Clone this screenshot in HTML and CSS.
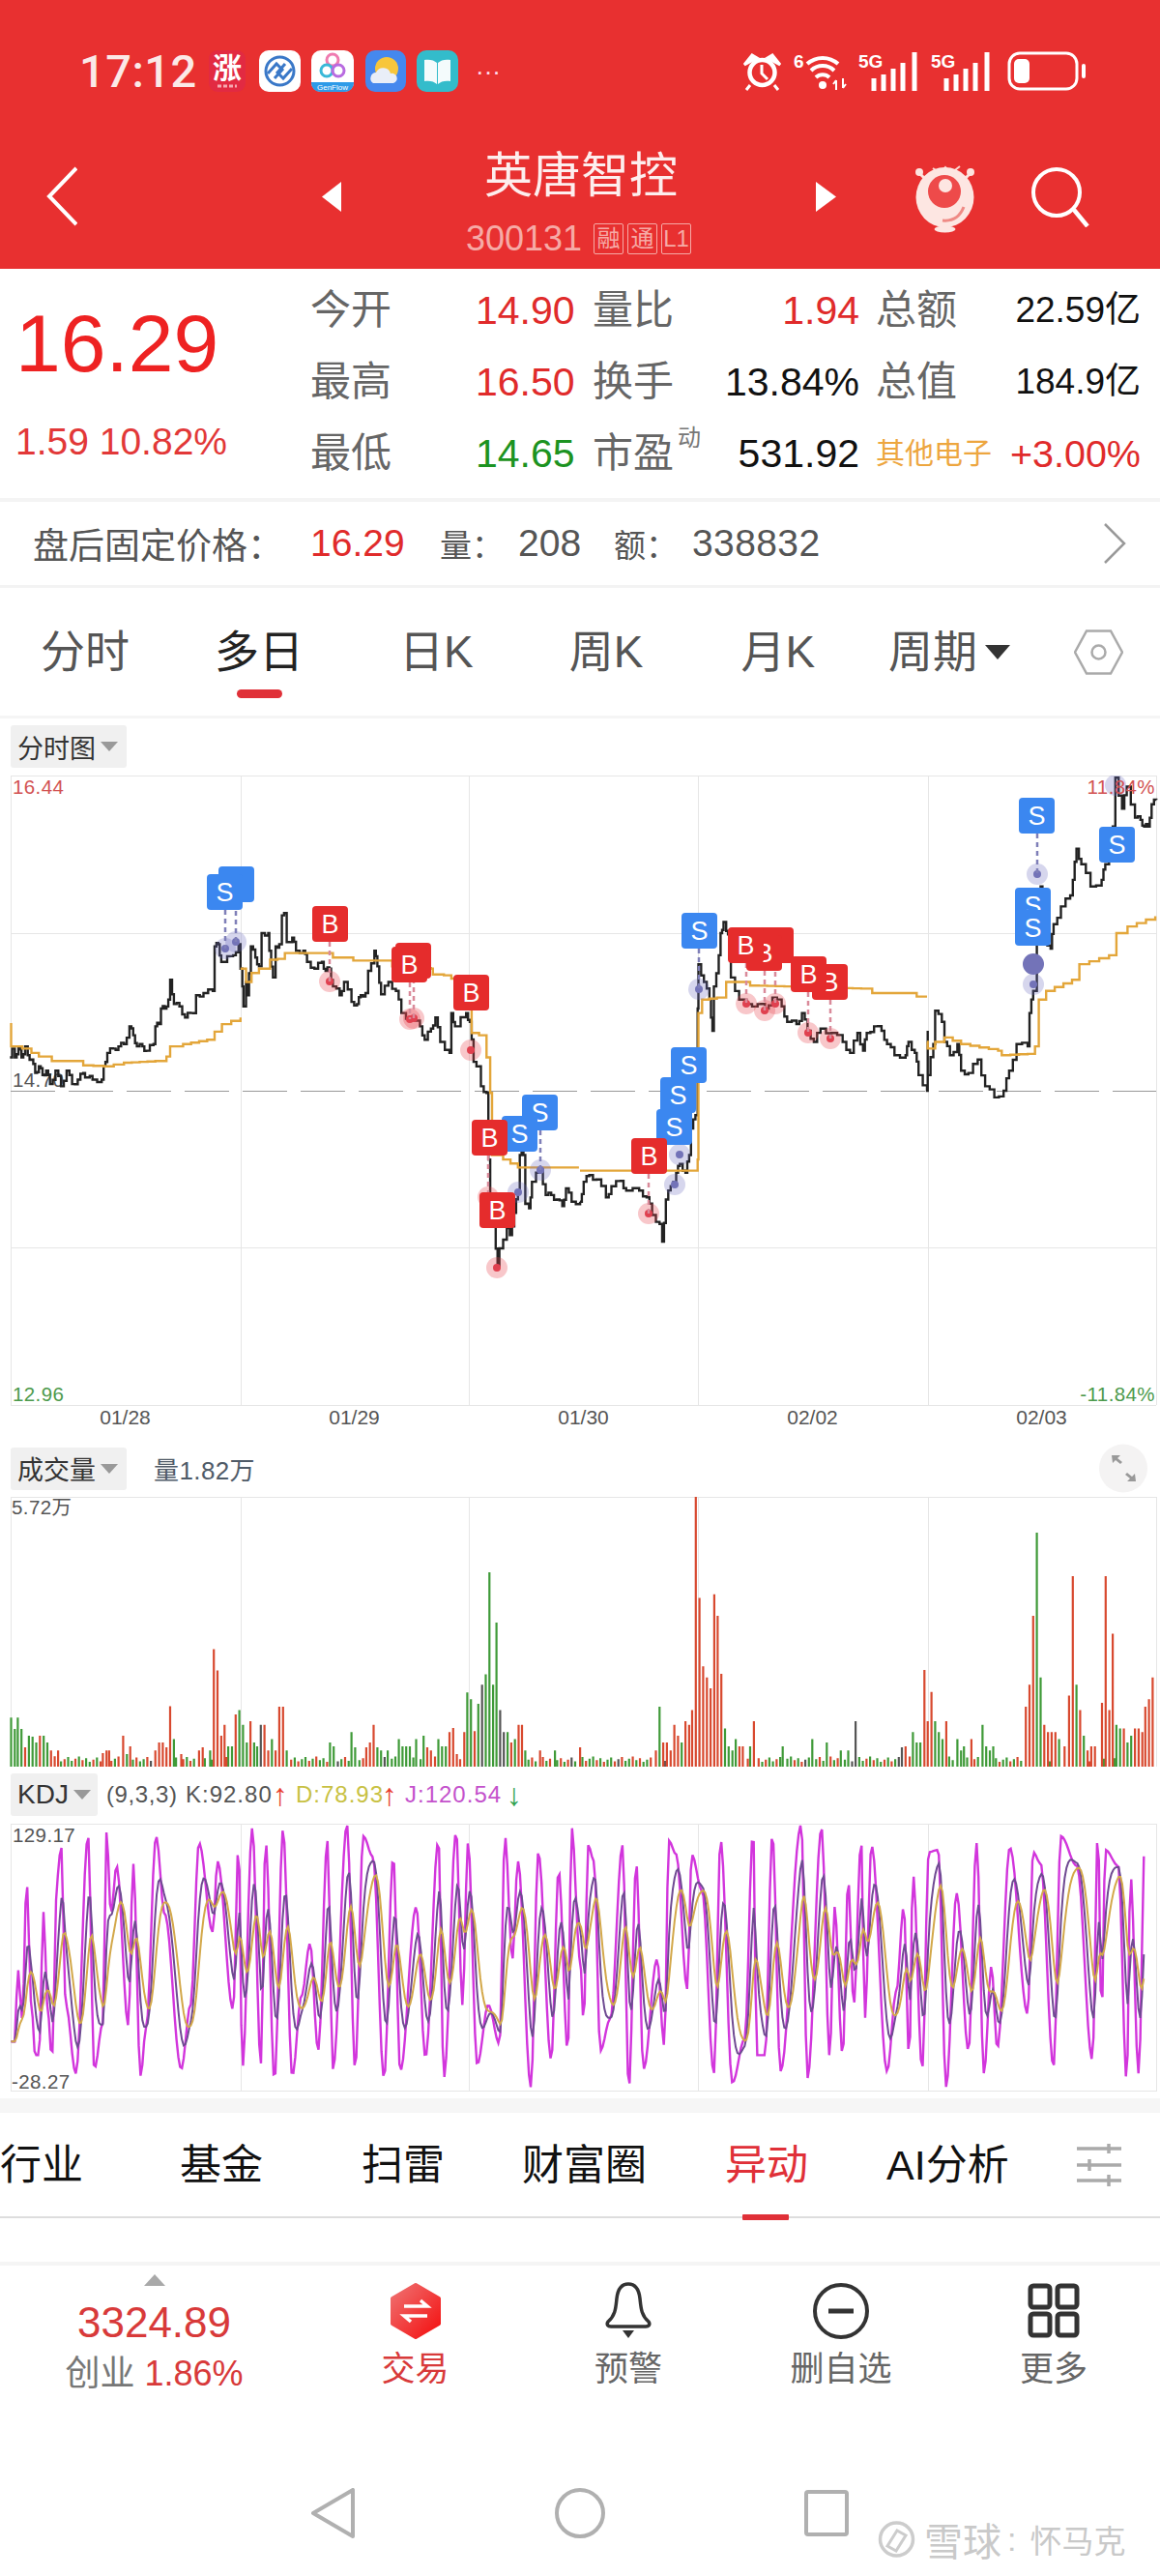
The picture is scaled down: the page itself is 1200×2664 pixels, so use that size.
FILE: index.html
```html
<!DOCTYPE html>
<html lang="zh">
<head>
<meta charset="utf-8">
<title>英唐智控</title>
<link rel="stylesheet" href="styles.css">
</head>
<body>
<div class="page">
  <header class="hero">
    <div class="status">
      <span class="time">17:12</span>
      <div class="apps">
        <svg class="app a1" viewBox="0 0 38 43"><rect width="38" height="43" rx="9" fill="#e22a42"/><text x="19" y="29" class="app-t">涨</text><path d="M9 37h20" stroke="#f6a8b0" stroke-width="3" stroke-dasharray="4 2"/></svg>
        <svg class="app a2" viewBox="0 0 43 43"><rect width="43" height="43" rx="10" fill="#fff"/><circle cx="21.500" cy="21.500" r="14.500" fill="none" stroke="#3a78c8" stroke-width="3"/><path d="M9 24l9-10 6 6-8 9M34 19l-9 10-6-6 8-9" fill="none" stroke="#3a78c8" stroke-width="3"/></svg>
        <svg class="app a3" viewBox="0 0 44 43"><rect width="44" height="43" rx="10" fill="#fff"/><path d="M0 33h44v1a9 9 0 0 1-9 9H9a9 9 0 0 1-9-9z" fill="#2e9be8"/><circle cx="22" cy="10" r="6" fill="none" stroke="#ef7bb0" stroke-width="3"/><circle cx="16" cy="21" r="6" fill="none" stroke="#39b8d8" stroke-width="3"/><circle cx="28" cy="21" r="6" fill="none" stroke="#b86ae0" stroke-width="3"/><text x="22" y="41" class="app-g">GenFlow</text></svg>
        <svg class="app a4" viewBox="0 0 42 43"><rect width="42" height="43" rx="10" fill="#4588ee"/><circle cx="22" cy="19" r="12" fill="#f7c63b"/><path d="M8 34a6 6 0 0 1 3-11 8 8 0 0 1 15 1 5 5 0 0 1 3 10z" fill="#e9eef8"/></svg>
        <svg class="app a5" viewBox="0 0 43 43"><rect width="43" height="43" rx="10" fill="#33bccb"/><path d="M8 10c5-1 10 0 13 3v22c-3-3-8-4-13-3zM35 10c-5-1-10 0-13 3v22c3-3 8-4 13-3z" fill="#f4fbfc"/></svg>
        <span class="more">···</span>
      </div>
      <div class="sys">
        <svg class="s-alarm" viewBox="0 0 41 40"><circle cx="20.500" cy="21" r="13" fill="none" stroke="#fff" stroke-width="4.500"/><path d="M20 13v9l6 6" fill="none" stroke="#fff" stroke-width="3"/><path d="M2 13l8-10 5 3zM39 13l-8-10-5 3zM8 34l-4 5M33 34l4 5" fill="#fff" stroke="#fff" stroke-width="3"/></svg>
        <svg class="s-wifi" viewBox="0 0 56 41"><text x="0" y="17" class="sig-t">6</text><path d="M14 13a24 24 0 0 1 32 0M18 20a17 17 0 0 1 24 0M23 27a10 10 0 0 1 14 0" fill="none" stroke="#fff" stroke-width="4"/><circle cx="30" cy="35" r="4" fill="#fff"/><path d="M44 30v10M41 34l3-4M51 28v10M54 34l-3 4" stroke="#fff" stroke-width="2" fill="none"/></svg>
        <svg class="s-sig" viewBox="0 0 62 41"><text x="0" y="17" class="sig-t">5G</text><path d="M16 41V28M26 41V24M36 41V18M46 41V12M58 41V1" stroke="#fff" stroke-width="5" fill="none"/></svg>
        <svg class="s-sig" viewBox="0 0 62 41"><text x="0" y="17" class="sig-t">5G</text><path d="M16 41V28M26 41V24M36 41V18M46 41V12M58 41V1" stroke="#fff" stroke-width="5" fill="none"/></svg>
        <svg class="s-bat" viewBox="0 0 81 41"><rect x="2" y="2" width="70" height="37" rx="11" fill="none" stroke="#fff" stroke-width="3"/><rect x="7" y="8" width="16" height="25" rx="5" fill="#fff"/><rect x="77" y="13" width="4" height="15" rx="2" fill="#fff"/></svg>
      </div>
    </div>
    <div class="nav">
      <svg class="back" viewBox="0 0 32 62"><path d="M31 2L3 31l28 29" fill="none" stroke="#fff" stroke-width="4"/></svg>
      <svg class="arrow-l" viewBox="0 0 20 31"><path d="M20 0v31L0 15.500z" fill="#fff"/></svg>
      <div class="title-block">
        <div class="title">英唐智控</div>
        <div class="code-row">
          <span class="code">300131</span>
          <span class="tags"><span class="tag">融</span><span class="tag">通</span><span class="tag">L1</span></span>
        </div>
      </div>
      <svg class="arrow-r" viewBox="0 0 21 31"><path d="M0 0v31l21-15.500z" fill="#fff"/></svg>
      <svg class="mascot" viewBox="0 0 61 75"><path d="M18 8l8 5 5-6 6 6 9-7" fill="none" stroke="#fbd8d0" stroke-width="2"/><circle cx="4" cy="12" r="4" fill="#fde4df"/><circle cx="57" cy="12" r="4" fill="#fde4df"/><path d="M5 14l8 8M56 14l-8 8" stroke="#fde4df" stroke-width="3"/><ellipse cx="30.500" cy="38" rx="30" ry="31" fill="#fde6e2"/><circle cx="30" cy="32" r="17" fill="#ee4a4a"/><circle cx="31" cy="26" r="7" fill="#fde6e2"/><path d="M28 62c10 1 18-4 22-14" fill="none" stroke="#ef8a85" stroke-width="3"/><ellipse cx="30.500" cy="71" rx="11" ry="3.500" fill="#fde6e2"/></svg>
      <svg class="search" viewBox="0 0 61 63"><circle cx="27" cy="27" r="24" fill="none" stroke="#fff" stroke-width="4"/><path d="M45 45l14 17" stroke="#fff" stroke-width="4.500"/></svg>
    </div>
  </header>

  <section class="quote">
    <div class="quote-main">
      <div class="price">16.29</div>
      <div class="change">1.59 10.82%</div>
    </div>
    <span class="lb">今开</span><span class="vl red">14.90</span><span class="lb">量比</span><span class="vr red">1.94</span><span class="lb">总额</span><span class="vm">22.59亿</span>
    <span class="lb">最高</span><span class="vl red">16.50</span><span class="lb">换手</span><span class="vr">13.84%</span><span class="lb">总值</span><span class="vm">184.9亿</span>
    <span class="lb">最低</span><span class="vl green">14.65</span><span class="lb pe">市盈<sup class="sup">动</sup></span><span class="vr">531.92</span><span class="sector">其他电子</span><span class="vm red big">+3.00%</span>
  </section>

  <section class="after">
    <span class="af-l">盘后固定价格：</span><span class="af-n red n1">16.29</span>
    <span class="af-k k1">量：</span><span class="af-n n2">208</span>
    <span class="af-k k2">额：</span><span class="af-n n3">338832</span>
    <svg class="af-chev" viewBox="0 0 23 42"><path d="M1 1l20 20L1 41" fill="none" stroke="#999" stroke-width="2.500"/></svg>
  </section>

  <nav class="tabs">
    <span class="tab t1">分时</span>
    <span class="tab t2 on">多日</span>
    <span class="tab t3">日K</span>
    <span class="tab t4">周K</span>
    <span class="tab t5">月K</span>
    <span class="tab t6">周期</span>
    <span class="tab-caret"></span>
    <svg class="hex" viewBox="0 0 51 47"><path d="M1 23.500L13 1.500h25l12 22-12 22H13z" fill="none" stroke="#aaa" stroke-width="2.500"/><circle cx="25.500" cy="23.500" r="7" fill="none" stroke="#aaa" stroke-width="2.500"/></svg>
  </nav>

  <section class="charts">
    <div class="chip chip-main">分时图<i class="caret"></i></div>
    <svg class="plot plot-main" viewBox="0 802 1200 652">
      <path class="frame" d="M11.500 1453V802.500H1196V1453M249.500 802V1453M485.500 802V1453M722.500 802V1453M960.500 802V1453M11 965.500H1196M11 1290.500H1196M11 1453.500H1196"/>
      <path class="mid" d="M11 1128.500H1196"/>
      <text class="ax red-t" x="13" y="821">16.44</text>
      <text class="ax gray-t" x="13" y="1124">14.70</text>
      <text class="ax green-t" x="13" y="1449">12.96</text>
      <path id="price" class="line-price"/>
      <path id="avg" class="line-avg"/>
      <g class="halo-s"><circle cx="233" cy="981" r="11"/><circle cx="244" cy="974" r="11"/><circle cx="536" cy="1233" r="11"/><circle cx="559" cy="1210" r="11"/><circle cx="723" cy="1023" r="11"/><circle cx="698" cy="1225" r="11"/><circle cx="703" cy="1194" r="11"/><circle cx="1073" cy="904" r="11"/><circle cx="1069" cy="1018" r="11"/><circle cx="1154" cy="812" r="11"/></g>
      <g class="dot-s"><circle cx="233" cy="981" r="4"/><circle cx="244" cy="974" r="4"/><circle cx="536" cy="1233" r="4"/><circle cx="559" cy="1210" r="4"/><circle cx="723" cy="1023" r="4"/><circle cx="698" cy="1225" r="4"/><circle cx="703" cy="1194" r="4"/><circle cx="1073" cy="904" r="4"/><circle cx="1069" cy="1018" r="4"/><circle cx="1069" cy="997" r="11"/></g>
      <g class="halo-b"><circle cx="341" cy="1015" r="11"/><circle cx="424" cy="1054" r="11"/><circle cx="428" cy="1053" r="11"/><circle cx="487" cy="1086" r="11"/><circle cx="514" cy="1311" r="11"/><circle cx="505" cy="1238" r="11"/><circle cx="772" cy="1038" r="11"/><circle cx="791" cy="1045" r="11"/><circle cx="802" cy="1038" r="11"/><circle cx="836" cy="1068" r="11"/><circle cx="859" cy="1074" r="11"/><circle cx="671" cy="1255" r="11"/></g>
      <g class="dot-b"><circle cx="341" cy="1015" r="4"/><circle cx="424" cy="1054" r="4"/><circle cx="428" cy="1053" r="4"/><circle cx="487" cy="1086" r="4"/><circle cx="514" cy="1311" r="4"/><circle cx="772" cy="1038" r="4"/><circle cx="791" cy="1045" r="4"/><circle cx="802" cy="1038" r="4"/><circle cx="836" cy="1068" r="4"/><circle cx="859" cy="1074" r="4"/><circle cx="671" cy="1255" r="4"/></g>
      <path class="dash-s" d="M233 941V981M244 933V974M559 1169V1210M723 981V1023M1073 862V904"/>
      <path class="dash-b" d="M341 974V1015M424 1016V1054M428 1012V1053M505 1195V1238M772 996V1038M791 1004V1045M802 996V1038M836 1026V1068M859 1034V1074M671 1214V1255"/>
      <g class="sell" transform="translate(226 896)"><rect width="37" height="37" rx="4"/></g>
      <g class="sell" transform="translate(214 904)"><rect width="37" height="37" rx="4"/><text x="18.500" y="28">S</text></g>
      <g class="buy" transform="translate(323 937)"><rect width="37" height="37" rx="4"/><text x="18.500" y="28">B</text></g>
      <g class="buy" transform="translate(409 975)"><rect width="37" height="37" rx="4"/></g>
      <g class="buy" transform="translate(405 979)"><rect width="37" height="37" rx="4"/><text x="18.500" y="28">B</text></g>
      <g class="buy" transform="translate(469 1008)"><rect width="37" height="37" rx="4"/><text x="18.500" y="28">B</text></g>
      <g class="sell" transform="translate(540 1132)"><rect width="37" height="37" rx="4"/><text x="18.500" y="28">S</text></g>
      <g class="sell" transform="translate(519 1154)"><rect width="37" height="37" rx="4"/><text x="18.500" y="28">S</text></g>
      <g class="buy" transform="translate(488 1158)"><rect width="37" height="37" rx="4"/><text x="18.500" y="28">B</text></g>
      <g class="buy" transform="translate(496 1233)"><rect width="37" height="37" rx="4"/><text x="18.500" y="28">B</text></g>
      <g class="sell" transform="translate(705 944)"><rect width="37" height="37" rx="4"/><text x="18.500" y="28">S</text></g>
      <g class="buy" transform="translate(784 959)"><rect width="37" height="37" rx="4"/></g>
      <g class="buy" transform="translate(772 967)"><rect width="37" height="37" rx="4"/><text x="18.500" y="28">B</text></g>
      <g class="buy" transform="translate(753 959)"><rect width="37" height="37" rx="4"/><text x="18.500" y="28">B</text></g>
      <g class="buy" transform="translate(840 997)"><rect width="37" height="37" rx="4"/><text x="18.500" y="28">B</text></g>
      <g class="buy" transform="translate(818 989)"><rect width="37" height="37" rx="4"/><text x="18.500" y="28">B</text></g>
      <g class="sell" transform="translate(694 1083)"><rect width="37" height="37" rx="4"/><text x="18.500" y="28">S</text></g>
      <g class="sell" transform="translate(683 1114)"><rect width="37" height="37" rx="4"/><text x="18.500" y="28">S</text></g>
      <g class="sell" transform="translate(679 1147)"><rect width="37" height="37" rx="4"/><text x="18.500" y="28">S</text></g>
      <g class="buy" transform="translate(653 1177)"><rect width="37" height="37" rx="4"/><text x="18.500" y="28">B</text></g>
      <g class="sell" transform="translate(1054 825)"><rect width="37" height="37" rx="4"/><text x="18.500" y="28">S</text></g>
      <g class="sell" transform="translate(1050 918)"><rect width="37" height="37" rx="4"/><text x="18.500" y="28">S</text></g>
      <g class="sell" transform="translate(1050 941)"><rect width="37" height="37" rx="4"/><text x="18.500" y="28">S</text></g>
      <g class="sell" transform="translate(1137 855)"><rect width="37" height="37" rx="4"/><text x="18.500" y="28">S</text></g>
      <text class="ax red-t end" x="1195" y="821">11.84%</text>
      <text class="ax green-t end" x="1195" y="1449">-11.84%</text>
    </svg>
    <div class="dates"><span>01/28</span><span>01/29</span><span>01/30</span><span>02/02</span><span>02/03</span></div>

    <div class="vol-head">
      <div class="chip">成交量<i class="caret"></i></div>
      <span class="vol-val">量1.82万</span>
      <svg class="expand" viewBox="0 0 50 51"><circle cx="25" cy="25.500" r="25" fill="#f4f3f3"/><path d="M13 12h9l-3 3 5 4-2 2-5-4-3 3zM38 39h-9l3-3-5-4 2-2 5 4 3-3z" fill="#999"/></svg>
    </div>
    <svg class="plot plot-vol" viewBox="0 1548 1200 279">
      <path class="frame" d="M11.500 1827V1548.500H1196V1827M249.500 1548V1827M485.500 1548V1827M722.500 1548V1827M960.500 1548V1827"/>
      <text class="ax gray-t" x="12" y="1566">5.72万</text>
      <path id="vol-dark" class="bar-dark"/><path id="vol-green" class="bar-green"/><path id="vol-red" class="bar-red"/>
    </svg>

    <div class="kdj-head">
      <div class="chip chip-kdj">KDJ<i class="caret"></i></div>
      <span class="kdj-p">(9,3,3)</span>
      <span class="kdj-k">K:92.80</span><span class="up">↑</span>
      <span class="kdj-d">D:78.93</span><span class="up">↑</span>
      <span class="kdj-j">J:120.54</span><span class="down">↓</span>
    </div>
    <svg class="plot plot-kdj" viewBox="0 1886 1200 277">
      <path class="frame" d="M11.500 2163V1886.500H1196V2163M249.500 1886V2163M485.500 1886V2163M722.500 1886V2163M960.500 1886V2163M11 2162.500H1196"/>
      <text class="ax gray-t" x="13" y="1905">129.17</text>
      <text class="ax gray-t" x="12" y="2160">-28.27</text>
      <path id="kdj-j" class="ln-j"/><path id="kdj-k" class="ln-k"/><path id="kdj-d" class="ln-d"/>
    </svg>
  </section>
  <div class="band"></div>

  <nav class="subtabs">
    <span class="st s1">行业</span>
    <span class="st s2">基金</span>
    <span class="st s3">扫雷</span>
    <span class="st s4">财富圈</span>
    <span class="st s5 on">异动</span>
    <span class="st s6">AI分析</span>
    <svg class="sliders" viewBox="0 0 46 44"><path d="M0 5h46M0 22h46M0 38h46" stroke="#aaa" stroke-width="3.500"/><path d="M33 0v10M13 16v12M33 32v12" stroke="#aaa" stroke-width="3.500"/></svg>
  </nav>
  <div class="rule"></div>

  <footer class="bottom">
    <div class="idx">
      <i class="idx-up"></i>
      <span class="idx-v">3324.89</span>
      <span class="idx-n">创业 <b>1.86%</b></span>
    </div>
    <div class="act">
      <svg class="act-i" viewBox="0 0 54 60"><defs><linearGradient id="tr" x1="0" y1="0" x2="1" y2="1"><stop offset="0" stop-color="#ef7272"/><stop offset="1" stop-color="#f40f0f"/></linearGradient></defs><path d="M27 3l24 14v26L27 57 3 43V17z" fill="url(#tr)" stroke="url(#tr)" stroke-width="4" stroke-linejoin="round"/><path d="M15 25h24l-7-6M39 35H15l7 6" fill="none" stroke="#fff" stroke-width="3.500"/></svg>
      <span class="act-t red">交易</span>
    </div>
    <div class="act">
      <svg class="act-i" viewBox="0 0 54 60"><path d="M27 2c-7 0-11 6-12 15-1 9-1 17-9 24-2 3 0 5 3 5h36c3 0 5-2 3-5-8-7-8-15-9-24-1-9-5-15-12-15z" fill="none" stroke="#333" stroke-width="3.500"/><path d="M21 50h12l-6 8z" fill="#333"/></svg>
      <span class="act-t">预警</span>
    </div>
    <div class="act">
      <svg class="act-i" viewBox="0 0 58 60"><ellipse cx="29" cy="30" rx="27" ry="27" fill="none" stroke="#333" stroke-width="4"/><path d="M16 30h26" stroke="#333" stroke-width="5"/></svg>
      <span class="act-t">删自选</span>
    </div>
    <div class="act">
      <svg class="act-i" viewBox="0 0 54 60"><g fill="none" stroke="#333" stroke-width="5"><rect x="3" y="4" width="20" height="22" rx="3"/><rect x="31" y="4" width="20" height="22" rx="3"/><rect x="3" y="33" width="20" height="22" rx="3"/><rect x="31" y="33" width="20" height="22" rx="3"/></g></svg>
      <span class="act-t">更多</span>
    </div>
  </footer>

  <div class="sysnav">
    <svg class="sn sn-back" viewBox="0 0 46 52"><path d="M44 2v48L3 26z" fill="none" stroke="#b0b0b0" stroke-width="4" stroke-linejoin="round"/></svg>
    <svg class="sn sn-home" viewBox="0 0 52 52"><circle cx="26" cy="26" r="24" fill="none" stroke="#b0b0b0" stroke-width="4"/></svg>
    <svg class="sn sn-rec" viewBox="0 0 46 48"><rect x="2" y="2" width="42" height="44" rx="2" fill="none" stroke="#b0b0b0" stroke-width="4"/></svg>
  </div>
  <div class="mark">
    <svg class="mark-i" viewBox="0 0 39 38"><circle cx="19.500" cy="19" r="17" fill="none" stroke="#ccc" stroke-width="3.500"/><path d="M10 26L20 10l9 5-10 16z" fill="none" stroke="#ccc" stroke-width="3"/></svg>
    <span class="mark-a">雪球</span><span class="mark-c">:</span><span class="mark-b">怀马克</span>
  </div>
</div>
<script src="chart.js"></script>
</body>
</html>
```

FILE: styles.css
```css
*{box-sizing:border-box}
html,body{margin:0;padding:0;background:#fff}
body{font-family:"Liberation Sans","Noto Sans CJK SC",sans-serif;color:#333}
.page{width:1200px;height:2664px;overflow:hidden;position:relative}
svg{display:block;flex:none}
.red{color:#e02b2b}
.green{color:#1c9321}

.hero{background:#e83030;height:278px;color:#fff}
.status{display:flex;align-items:center;height:95px;padding:52px 77px 0 82px}
.time{font-family:Roboto,"Liberation Sans",sans-serif;font-weight:500;font-size:47px;line-height:43px;width:134px;color:#fbe9e7;flex:none;letter-spacing:.5px}
.apps{display:flex;align-items:center;gap:12px}
.app{height:43px}
.a1{width:38px}.a2{width:43px;margin-left:2px}.a3{width:44px;margin-left:-1px}.a4{width:42px}.a5{width:43px;margin-left:-1px}
.app-t{font-size:30px;fill:#fff;text-anchor:middle;font-weight:700}
.app-g{font-size:8px;fill:#fff;text-anchor:middle}
.more{font-size:26px;line-height:26px;margin-left:6px;color:#fde}
.sys{display:flex;align-items:center;margin-left:auto;height:41px}
.s-alarm{width:41px;height:40px}
.s-wifi{width:56px;height:41px;margin-left:12px}
.s-sig{width:62px;height:41px;margin-left:11px}
.s-sig + .s-sig{margin-left:13px}
.s-bat{width:81px;height:41px;margin-left:17px}
.sig-t{font-size:19px;font-weight:700;fill:#fff}

.nav{display:flex;align-items:center;height:92px;margin-top:62px;padding-left:48px}
.back{width:32px;height:62px}
.arrow-l{width:20px;height:31px;margin-left:253px}
.title-block{width:231px;margin-left:129px;align-self:flex-start}
.title{font-size:50px;line-height:50px;padding-left:19px;color:#fdeeee;white-space:nowrap}
.code-row{display:flex;align-items:center;margin-top:24px;height:32px;color:#f6aaa6}
.code{font-size:36px;line-height:32px;width:132px;flex:none}
.tags{display:flex;gap:4px}
.tag{width:31px;height:32px;border:1px solid #f6aaa6;border-radius:2px;font-size:24px;line-height:30px;text-align:center}
.arrow-r{width:21px;height:31px;margin-left:131px}
.mascot{width:61px;height:75px;margin-left:82px}
.search{width:61px;height:63px;margin-left:58px}

.quote{height:237px;padding-top:6px;display:grid;grid-template-columns:321px 171px 121px 85px 208px 120px 154px;grid-template-rows:74px 74px 74px;align-items:center}
.quote-main{grid-row:1/4;grid-column:1;align-self:start;padding:30px 0 0 16px}
.price{font-size:84px;line-height:82px;color:#ee2222}
.change{font-size:39px;line-height:40px;margin-top:41px;color:#e23838;white-space:nowrap}
.lb{font-size:42px;line-height:46px;color:#666;white-space:nowrap}
.vl{font-size:41px;line-height:46px}
.vr{font-size:41px;line-height:46px;color:#111;text-align:right;padding-right:17px}
.vr.red{color:#e02b2b}
.vm{font-size:37px;line-height:46px;color:#111;text-align:right;white-space:nowrap}
.vm.red{color:#e02b2b}
.vm.big{font-size:39.500px}
.pe{position:relative}
.sup{position:absolute;left:88px;top:-6px;font-size:24px;line-height:26px;color:#777}
.sector{font-size:30px;line-height:46px;color:#eda63f;white-space:nowrap}

.after{height:93px;display:flex;align-items:center;border-top:4px solid #f4f4f4;border-bottom:3px solid #f3f3f3;padding:0 35px 0 34px;color:#555}
.af-l{font-size:37px;width:287px;flex:none;white-space:nowrap}
.af-n{font-size:39px;flex:none}
.af-k{font-size:33px;flex:none;width:81px;white-space:nowrap}
.n1{width:134px}.n2{width:99px}.n3{letter-spacing:.4px}
.af-chev{width:23px;height:42px;margin-left:auto}

.tabs{height:135px;display:flex;align-items:center;border-bottom:3px solid #f5f5f5;color:#555}
.tab{font-size:46px;line-height:46px;position:relative;white-space:nowrap;flex:none}
.t1{margin-left:42px}.t2{margin-left:88px;color:#222}.t3{margin-left:99px}.t4{margin-left:99px}.t5{margin-left:101px}.t6{margin-left:76px}
.tab.on::after{content:"";position:absolute;left:23px;top:62px;width:47px;height:9px;border-radius:5px;background:#e03038}
.tab-caret{width:0;height:0;border-left:13px solid transparent;border-right:13px solid transparent;border-top:15px solid #333;margin-left:8px}
.hex{width:51px;height:47px;margin-left:66px}

.charts{display:flex;flex-direction:column}
.chip{height:44px;width:120px;margin-left:11px;background:#f0f0f0;border-radius:3px;display:flex;align-items:center;padding-left:7px;font-size:27px;color:#333;flex:none}
.chip-main{margin-top:7px}
.chip-kdj{width:90px}
.caret{display:block;width:0;height:0;border-left:9px solid transparent;border-right:9px solid transparent;border-top:10px solid #999;margin-left:5px}
.plot{width:1200px}
.plot-main{height:652px;margin-top:8px}
.plot-vol{height:279px;margin-top:8px}
.plot-kdj{height:277px;margin-top:8px}
.frame{fill:none;stroke:#e6e6e6;stroke-width:1;shape-rendering:crispEdges}
.mid{fill:none;stroke:#999;stroke-width:1;stroke-dasharray:46 14;shape-rendering:crispEdges}
.ax{font-size:20.500px;font-family:"Liberation Sans","Noto Sans CJK SC",sans-serif;letter-spacing:.4px}
.end{text-anchor:end}
.red-t{fill:#d25252}.green-t{fill:#4c9a4c}.gray-t{fill:#555}
.line-price{fill:none;stroke:#222;stroke-width:2.400}
.line-avg{fill:none;stroke:#e3a63a;stroke-width:2.400}
.halo-s circle{fill:rgba(108,108,190,.28)}
.dot-s circle{fill:#7373b8}
.halo-b circle{fill:rgba(232,70,80,.3)}
.dot-b circle{fill:#e0404f}
.dash-s{fill:none;stroke:#7f7fb8;stroke-width:2.500;stroke-dasharray:5 4}
.dash-b{fill:none;stroke:#d98a9a;stroke-width:2.500;stroke-dasharray:5 4}
.sell rect{fill:#3b87f0}
.buy rect{fill:#e52c2c}
.sell text,.buy text{fill:#fff;font-size:27px;text-anchor:middle;font-family:"Liberation Sans",sans-serif}

.dates{display:grid;grid-template-columns:repeat(5,237px);padding-left:11px;height:43px;font-size:21px;line-height:24px;color:#555;text-align:center}
.vol-head{display:flex;align-items:center;height:43px}
.vol-val{font-size:26px;color:#4f5b68;margin-left:28px;letter-spacing:.4px}
.expand{width:50px;height:51px;margin:0 13px 0 auto}
.bar-red,.bar-green,.bar-dark{fill:none;stroke-width:2.200}
.bar-red{stroke:#d8492f}.bar-green{stroke:#3f9a38}.bar-dark{stroke:#555}

.kdj-head{display:flex;align-items:center;height:44px;margin-top:7px;font-size:24px;color:#555;letter-spacing:1px;white-space:nowrap}
.kdj-head .chip{letter-spacing:0;font-size:28px}
.kdj-p{margin-left:9px;width:82px;flex:none;letter-spacing:.6px}
.kdj-k{width:90px;flex:none}
.up{color:#e8402c;width:24px;flex:none;font-size:32px;line-height:32px;text-align:left}
.down{color:#33a350;width:24px;flex:none;font-size:32px;line-height:32px}
.kdj-d{color:#c8c143;width:89px;flex:none}
.kdj-j{color:#c452cc;width:105px;flex:none}
.ln-j{fill:none;stroke:#d235dc;stroke-width:2.400}
.ln-k{fill:none;stroke:#6f4a92;stroke-width:2}
.ln-d{fill:none;stroke:#d3a84a;stroke-width:2}

.band{height:15px;margin-top:7px;background:#f6f6f6}
.subtabs{height:109px;display:flex;align-items:center;border-bottom:2px solid #ddd;color:#111}
.st{font-size:43px;line-height:46px;position:relative;flex:none;white-space:nowrap}
.s1{margin-left:0}.s2{margin-left:100px}.s3{margin-left:102px}.s4{margin-left:80px}.s5{margin-left:81px;color:#e03038}.s6{margin-left:81px}
.st.on::before{content:"";position:absolute;left:-55px;width:192px;top:79px;height:4px;background:#fff}
.st.on::after{content:"";position:absolute;left:18px;top:74px;width:48px;height:6px;background:#e03038;border-radius:1px}
.sliders{width:46px;height:44px;margin-left:70px}
.rule{height:4px;margin-top:45px;background:#f5f5f5}

.bottom{display:grid;grid-template-columns:319px 221px 220px 220px 220px;height:137px}
.idx{display:flex;flex-direction:column;align-items:center;padding-top:9px}
.idx-up{display:block;width:0;height:0;border-left:11px solid transparent;border-right:11px solid transparent;border-bottom:12px solid #a9a9a9}
.idx-v{font-size:44px;line-height:42px;margin-top:17px;color:#d83a3a}
.idx-n{font-size:36px;line-height:36px;margin-top:14px;color:#777;white-space:nowrap}
.idx-n b{font-weight:400;color:#d83a3a}
.act{display:flex;flex-direction:column;align-items:center;padding-top:17px}
.act-i{height:60px;width:58px}
.act-t{font-size:35px;line-height:34px;margin-top:13px;color:#666}
.act-t.red{color:#d83a3a}

.sysnav{display:flex;margin-top:93px;padding-left:321px}
.sn{height:52px}
.sn-back{width:46px}
.sn-home{width:52px;margin-left:207px}
.sn-rec{width:46px;height:48px;margin-left:206px;margin-top:2px}
.mark{position:absolute;left:908px;top:2607px;display:flex;align-items:center;height:38px;color:#c9c9c9}
.mark-i{width:39px;height:38px}
.mark-a{font-size:40px;margin-left:9px}
.mark-c{font-size:34px;margin-left:6px}
.mark-b{font-size:33px;margin-left:14px}
```

FILE: chart.js
```js
(function () {
  var LX = 1 / 2.613, MY = 1 / 2.178, VY = 1 / 2.119;
  function X(zx, right) { return (right ? 600 : 0) + zx * LX; }
  function mainY(zy) { return 740 + zy * MY; }
  function lowY(zy) { return 1460 + zy * VY; }
  function f(n) { return n.toFixed(1); }

  /* price and average traces, one array per session: x,y pairs */
  var priceL = [27,770,33,750,40,770,50,745,58,770,68,745,75,765,85,775,95,805,105,790,115,810,125,800,135,830,150,800,165,835,180,800,195,830,210,820,225,805,235,815,250,820,275,820,280,790,290,760,305,750,320,745,335,740,350,700,360,720,370,745,385,745,395,755,415,740,420,700,430,695,435,660,445,660,455,640,460,595,470,650,485,655,500,680,515,670,530,660,530,630,550,625,575,620,580,520,590,515,598,555,630,540,645,515,
    650,570,655,610,658,655,665,600,668,630,678,520,690,545,700,565,707,490,725,490,728,530,738,590,745,520,755,515,762,450,768,445,775,510,790,500,800,530,820,530,830,555,850,570,870,555,880,575,890,570,900,610,918,630,930,600,950,645,965,650,975,630,988,625,995,575,1012,530,1020,565,1030,628,1050,600,1070,620,1085,670,1110,685,1135,700,1148,730,1165,705,1177,680,1190,735,1215,760,1220,670,1230,700,1260,670,
    1270,690,1280,780,1296,790,1300,835,1315,850,1320,1000,1325,1100,1335,1150,1345,1240,1350,1200,1370,1150,1378,1170,1390,1120,1400,1070,1405,990,1415,990,1420,1100,1430,1110,1438,1050,1460,1020,1475,1080,1490,1080,1505,1090,1520,1105,1530,1065,1545,1095,1568,1095];
  var priceR = [0,1095,10,1050,25,1035,45,1045,70,1085,85,1060,110,1048,125,1070,160,1070,180,1085,195,1125,215,1145,222,1185,232,1090,245,1060,260,1030,270,1010,285,1030,295,990,300,930,312,900,318,660,320,560,335,600,350,640,358,710,362,610,375,540,380,490,388,465,395,485,405,490,408,590,430,640,450,650,480,650,500,660,520,635,545,655,560,690,585,695,600,670,615,710,632,735,650,705,680,715,710,735,730,760,750,715,765,755,775,715,795,700,815,710,830,740,850,765,880,765,888,735,905,760,915,810,938,845,
    940,710,940,810,955,740,960,665,978,690,985,735,1000,765,1020,740,1030,800,1050,805,1075,775,1095,835,1120,860,1145,845,1160,800,1180,740,1210,745,1215,670,1225,620,1245,385,1255,500,1272,525,1280,470,1300,430,1325,405,1332,370,1342,300,1355,335,1380,385,1410,370,1420,335,1440,250,1447,140,1465,210,1478,160,1500,230,1515,235,1525,250,1535,250,1545,200,1558,190];
  var avgSegs = [
    [0,[27,695,30,745,60,750,85,760,105,768,140,778,215,778,225,788,280,790,335,782,420,778,450,768,460,745,495,740,560,730,580,712,600,695,650,680]],
    [0,[650,570,665,600,680,580,700,570,730,550,750,548,770,535,890,535,900,545,950,545,955,552,1040,552,1060,565,1165,570,1170,583,1200,585,1240,600,1270,660,1275,715,1295,720,1315,770,1325,850,1330,990,1360,1000,1400,1018,1565,1018]],
    [1,[0,1025,310,1025,318,1000,320,670,330,640,370,635,395,600,450,600,460,608,760,615,790,625,900,625,910,633,938,633]],
    [1,[938,735,940,750,960,735,985,725,1030,740,1130,755,1140,765,1210,762,1230,745,1240,640,1260,620,1330,595,1350,560,1430,540,1450,490,1480,475,1555,452]]
  ];

  function stepPath(pts, right, jitter, first) {
    var d = "";
    for (var i = 0; i < pts.length; i += 2) {
      var x = X(pts[i], right), y = mainY(pts[i + 1]);
      if (i === 0) { d += (first ? "M" : "L") + f(x) + " " + f(y); continue; }
      var px = X(pts[i - 2], right), py = mainY(pts[i - 1]);
      if (jitter && x - px > 3) {
        var mx = (px + x) / 2, my = (py + y) / 2 + ((i % 4) ? 2.5 : -2.5);
        d += "H" + f(mx) + "V" + f(my);
      }
      d += "H" + f(x) + "V" + f(y);
    }
    return d;
  }
  /* the average line is smooth: short diagonals rather than tall steps */
  function avgPath(pts, right) {
    var d = "";
    for (var i = 0; i < pts.length; i += 2) {
      var x = X(pts[i], right), y = mainY(pts[i + 1]);
      if (i === 0) { d += "M" + f(x) + " " + f(y); continue; }
      var px = X(pts[i - 2], right), py = mainY(pts[i - 1]);
      var n = Math.max(1, Math.round((x - px) / 9));
      for (var j = 1; j <= n; j++) {
        d += "H" + f(px + (x - px) * j / n) + "V" + f(py + (y - py) * j / n);
      }
    }
    return d;
  }
  document.getElementById("price").setAttribute("d", stepPath(priceL, false, true, true) + stepPath(priceR, true, true, false));
  document.getElementById("avg").setAttribute("d", avgSegs.map(function (s) { return avgPath(s[1], !!s[0]); }).join(""));

  /* volume: x, top, colour (r red, g green, d dark), in crop coordinates */
  var volL = [30,670,"g",40,695,"g",48,670,"g",58,695,"g",68,735,"r",78,710,"g",88,712,"g",98,725,"g",108,710,"r",118,710,"g",128,725,"g",138,742,"r",148,755,"r",157,742,"r",278,748,"r",288,742,"r",295,742,"r",333,710,"r",343,750,"g",352,733,"r",420,742,"r",430,725,"r",440,725,"r",450,735,"r",460,645,"r",470,717,"g",490,750,"r",538,742,"r",548,735,"r",568,742,"g",578,520,"r",588,567,"r",598,710,"r",607,686,"r",617,733,"g",627,733,"g",637,663,"r",647,654,"g",657,686,"g",667,725,"g",677,678,"r",687,725,"g",695,733,"g",705,686,"d",715,686,"r",725,742,"r",735,717,"g",745,742,"r",755,646,"r",765,646,"r",775,742,"g",892,725,"g",902,733,"g",950,702,"g",960,735,"g",990,735,"r",1000,725,"r",1010,686,"r",1020,735,"g",1030,742,"g",1048,742,"g",1078,717,"g",1088,733,"g",1098,733,"g",1108,733,"g",1125,717,"g",1145,710,"g",1155,735,"r",1165,742,"r",1185,717,"g",1195,733,"g",1205,733,"g",1215,702,"r",1225,693,"r",1235,750,"r",1255,702,"r",1263,615,"g",1273,630,"g",1283,700,"r",1293,640,"g",1303,598,"d",1313,575,"g",1323,352,"g",1333,598,"g",1342,462,"g",1352,654,"d",1362,702,"d",1372,702,"g",1382,725,"r",1392,717,"g",1402,686,"r",1411,686,"r",1420,742,"g",1460,742,"r",1500,742,"g",1568,735,"r"];
  var volR = [215,646,"g",205,742,"r",225,725,"r",235,725,"r",245,742,"r",255,686,"r",265,710,"r",275,725,"g",285,678,"r",295,686,"r",303,654,"r",313,185,"r",323,408,"r",333,558,"r",343,582,"r",353,606,"r",363,400,"r",372,447,"r",382,574,"r",392,694,"g",402,733,"g",412,742,"g",421,717,"g",431,733,"r",440,733,"r",460,733,"g",470,678,"r",548,733,"g",628,717,"g",667,725,"g",705,742,"g",725,742,"g",745,678,"d",870,735,"d",880,733,"r",900,702,"g",910,725,"g",920,725,"g",931,566,"r",940,678,"r",950,614,"r",960,678,"g",970,702,"g",980,717,"g",990,678,"r",1020,717,"g",1030,742,"g",1038,733,"g",1058,717,"r",1088,686,"g",1098,733,"g",1108,742,"g",1117,733,"g",1205,646,"r",1215,598,"r",1225,447,"r",1235,265,"g",1245,582,"g",1255,686,"r",1265,702,"r",1275,702,"r",1285,702,"r",1295,717,"g",1310,733,"r",1322,622,"r",1332,360,"r",1342,598,"g",1352,654,"r",1362,710,"g",1372,742,"r",1382,733,"r",1392,733,"r",1411,638,"r",1421,360,"r",1431,654,"r",1440,486,"r",1450,686,"g",1460,694,"g",1470,694,"r",1480,725,"g",1490,710,"g",1500,694,"r",1510,694,"r",1520,702,"r",1528,646,"r",1538,630,"r",1548,582,"r"];
  var bars = [], taken = {};
  function addBars(list, right) {
    for (var i = 0; i < list.length; i += 3) {
      var x = X(list[i], right);
      bars.push([x, lowY(list[i + 1]), list[i + 2]]);
      taken[Math.round((x - 11) / 3.72)] = 1;
    }
  }
  addBars(volL, false); addBars(volR, true);
  for (var s = 0; s < 318; s++) {
    if (taken[s]) continue;
    var h = 5 + ((s * 37) % 11) * 0.55;
    bars.push([11 + s * 3.72, 1827 - h, (s * 7) % 5 < 2 ? "r" : ((s * 11) % 13 === 0 ? "d" : "g")]);
  }
  var paths = { r: "", g: "", d: "" };
  bars.forEach(function (b) { paths[b[2]] += "M" + f(b[0]) + " 1827V" + f(b[1]); });
  document.getElementById("vol-red").setAttribute("d", paths.r);
  document.getElementById("vol-green").setAttribute("d", paths.g);
  document.getElementById("vol-dark").setAttribute("d", paths.d);

  /* KDJ: turning points of J; K and D are its running averages */
  var jL = [30,1380,40,1380,48,1220,60,1330,72,1030,85,1300,95,1410,105,1410,118,1095,128,1300,140,1415,155,1020,165,950,178,1300,205,1450,238,930,255,1440,278,1340,288,920,300,1100,315,995,347,1345,360,990,380,1455,395,1350,422,930,445,1100,490,1440,515,1300,538,945,575,1140,588,985,630,1310,645,945,655,1440,682,912,705,1430,718,940,742,1465,765,915,790,1455,815,1280,838,1165,860,1400,885,940,900,1440,938,905,960,1440,982,930,1008,975,1038,1460,1063,975,1082,1445,1125,1085,1150,1415,1185,940,1200,1460,1233,920,1250,1300,1265,945,1290,1430,1320,1300,1350,1385,1365,930,1385,1200,1400,985,1435,1480,1455,965,1490,1420,1510,1005,1535,1405,1545,910,1568,1200];
  var jR = [10,1340,22,950,38,985,55,1400,82,1330,115,950,132,1485,152,990,172,1440,208,1200,228,1390,240,940,260,970,290,1265,302,970,330,1050,362,1450,380,938,412,1470,445,1375,468,918,478,1410,500,1410,520,925,542,1445,598,905,615,1460,653,912,675,1415,688,1085,710,1410,725,1025,740,1300,760,940,770,1330,788,950,830,1445,855,1270,875,1085,890,1420,900,1012,925,1440,943,965,968,960,990,1480,1018,1055,1050,1400,1072,945,1092,1450,1112,1215,1128,1395,1162,955,1210,1320,1225,965,1245,990,1280,1435,1300,930,1343,995,1385,1420,1400,918,1410,1330,1420,960,1455,995,1478,1470,1488,1015,1510,1450,1528,915];
  var turn = [], i;
  for (i = 0; i < jL.length; i += 2) turn.push([X(jL[i], false), lowY(jL[i + 1])]);
  for (i = 0; i < jR.length; i += 2) turn.push([X(jR[i], true), lowY(jR[i + 1])]);

  var samples = [], seg = 0;
  for (var x = turn[0][0]; x <= turn[turn.length - 1][0]; x += 1.86) {
    while (seg < turn.length - 2 && turn[seg + 1][0] < x) seg++;
    var a = turn[seg], b = turn[seg + 1], t = (x - a[0]) / Math.max(b[0] - a[0], 0.01);
    var c = (1 - Math.cos(Math.PI * Math.min(t, 1))) / 2;
    samples.push([x, a[1] + (b[1] - a[1]) * c]);
  }
  function toPath(list) {
    return list.map(function (p, n) { return (n ? "L" : "M") + f(p[0]) + " " + f(p[1]); }).join("");
  }
  function ema(list, k) {
    var v = list[0][1];
    return list.map(function (p) { v += (p[1] - v) * k; return [p[0], v]; });
  }
  var kLine = ema(samples, 0.3), dLine = ema(kLine, 0.28);
  document.getElementById("kdj-j").setAttribute("d", toPath(samples));
  document.getElementById("kdj-k").setAttribute("d", toPath(kLine));
  document.getElementById("kdj-d").setAttribute("d", toPath(dLine));
})();
```
